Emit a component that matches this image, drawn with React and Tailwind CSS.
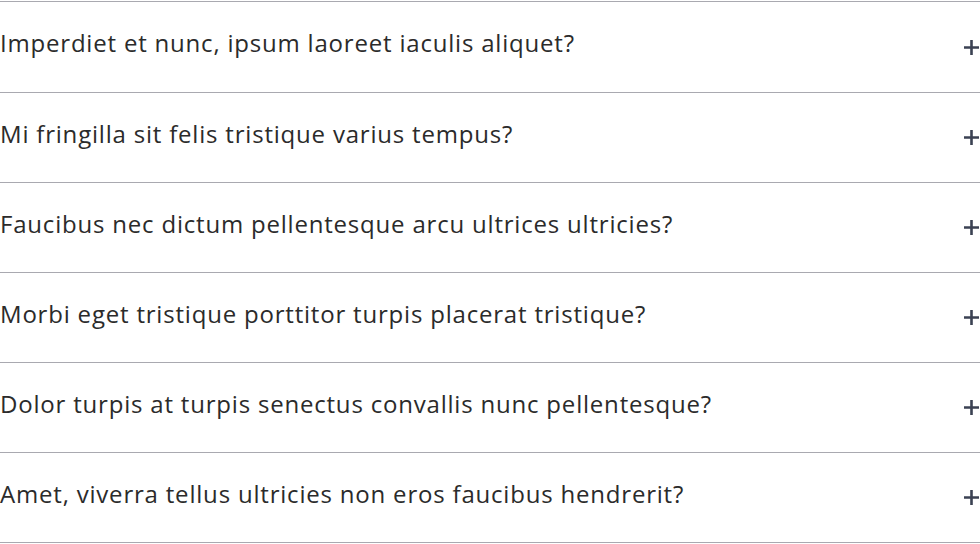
import React from 'react';

const questions = [
  'Imperdiet et nunc, ipsum laoreet iaculis aliquet?',
  'Mi fringilla sit felis tristique varius tempus?',
  'Faucibus nec dictum pellentesque arcu ultrices ultricies?',
  'Morbi eget tristique porttitor turpis placerat tristique?',
  'Dolor turpis at turpis senectus convallis nunc pellentesque?',
  'Amet, viverra tellus ultricies non eros faucibus hendrerit?',
];

const Plus = () => (
  <svg width="17" height="17" viewBox="0 0 17 17" className="shrink-0">
    <path d="M8.5 1v15M1 8.5h15" stroke="#3b4253" strokeWidth="2.6" />
  </svg>
);

export default function App() {
  return (
    <div className="w-[980px] h-[544px] bg-white pt-px overflow-hidden">
      <div className="border-t border-[#a9a9b0]">
        {questions.map((q, i) => (
          <div
            key={q}
            className={`flex items-center justify-between border-b border-[#a9a9b0] ${i === 0 ? 'h-[91px]' : 'h-[90px]'}`}
          >
            <span
              className="text-[24px] text-[#2b2b2b] tracking-[0.8px] pb-[8px]"
              style={{ fontFamily: '"Open Sans", sans-serif' }}
            >
              {q}
            </span>
            <Plus />
          </div>
        ))}
      </div>
    </div>
  );
}
